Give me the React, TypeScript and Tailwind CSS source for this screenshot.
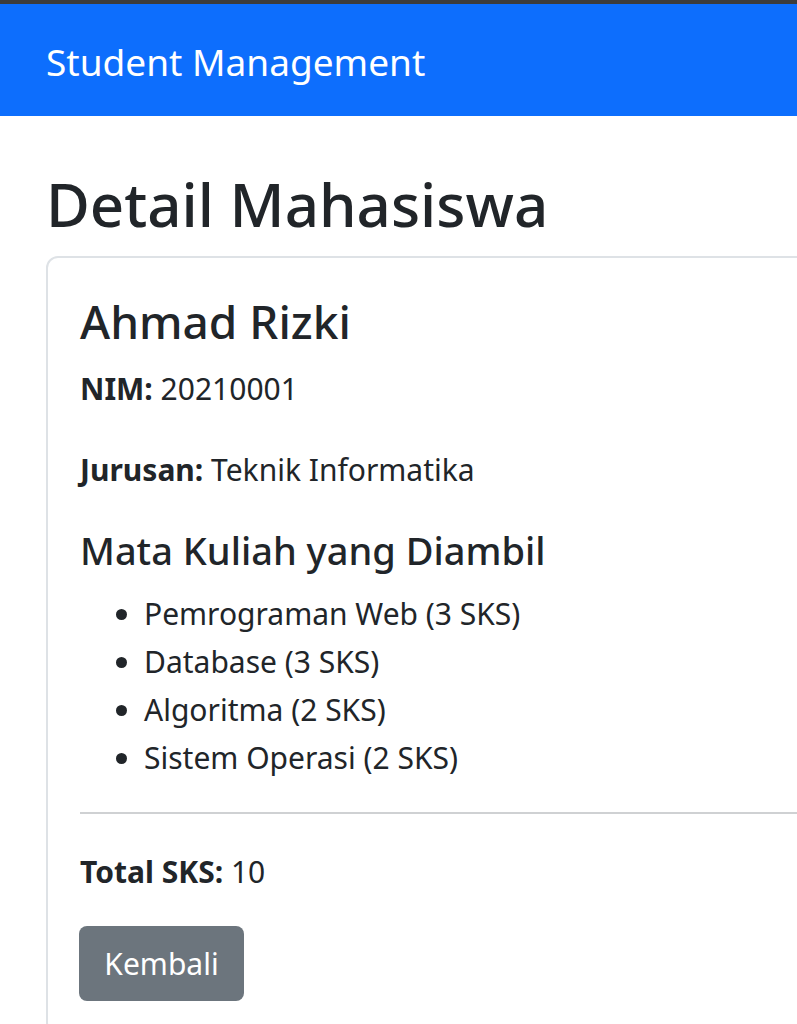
import React from "react";

const courses = [
  { name: "Pemrograman Web", sks: 3 },
  { name: "Database", sks: 3 },
  { name: "Algoritma", sks: 2 },
  { name: "Sistem Operasi", sks: 2 },
];

export default function App() {
  const total = courses.reduce((s, c) => s + c.sks, 0);
  return (
    <div
      className="min-h-[1024px] w-[797px] overflow-hidden bg-white text-[#212529] border-t-4 border-[#3c3c3c]"
      style={{ fontFamily: '"Noto Sans", "Open Sans", sans-serif' }}
    >
      <nav className="h-[112px] bg-[#0d6efd] px-[46px] flex items-center">
        <span className="text-[37px] leading-[60px] text-white pt-[4px]">Student Management</span>
      </nav>

      <main className="pl-[46px]">
        <h1 className="mt-[48px] mb-[12px] text-[60px] leading-[80px] font-medium">Detail Mahasiswa</h1>

        <div className="w-[770px] border-2 border-[#dee2e6] rounded-[12px] px-[32px] pt-[32px] pb-[32px]">
          <h3 className="text-[46px] leading-[62px] font-medium mb-[13px]">Ahmad Rizki</h3>
          <p className="text-[30px] leading-[48px] mb-[33px]">
            <strong className="font-bold">NIM:</strong> 20210001
          </p>
          <p className="text-[30px] leading-[48px] mb-[29px]">
            <strong className="font-bold">Jurusan:</strong> Teknik Informatika
          </p>
          <h4 className="text-[38px] leading-[54px] font-medium mb-[13px]">Mata Kuliah yang Diambil</h4>
          <ul className="list-disc pl-[64px] text-[30px] leading-[48px] mb-[30px]">
            {courses.map((c) => (
              <li key={c.name}>
                {c.name} ({c.sks} SKS)
              </li>
            ))}
          </ul>
          <hr className="border-0 border-t-2 border-[#cfd1d3] mr-[-40px] mb-[34px]" />
          <p className="text-[30px] leading-[48px] mb-[30px]">
            <strong className="font-bold">Total SKS:</strong> {total}
          </p>
          <button className="h-[75px] w-[165px] -ml-[1px] rounded-[8px] bg-[#6c757d] text-white text-[30px] leading-[48px]">
            Kembali
          </button>
        </div>
      </main>
    </div>
  );
}
